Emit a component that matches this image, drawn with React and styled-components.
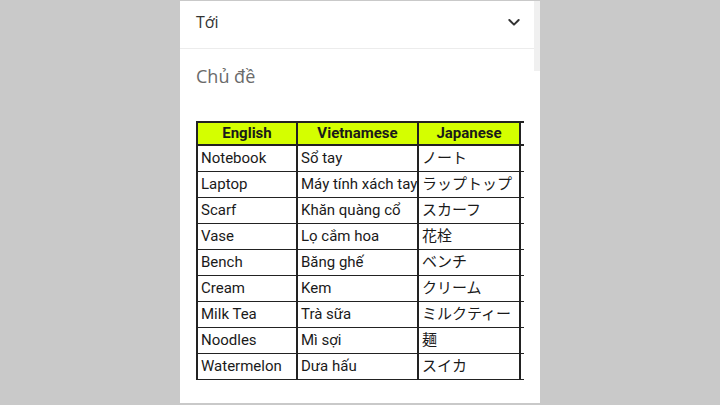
import React from 'react';
import styled, { createGlobalStyle } from 'styled-components';

const GlobalStyle = createGlobalStyle`
  html, body {
    margin: 0;
    padding: 0;
    background: #c9c9c9;
    height: 405px;
    overflow: hidden;
  }
`;

const Page = styled.div`
  width: 720px;
  height: 405px;
  display: flex;
  justify-content: flex-start;
`;

const Panel = styled.div`
  position: relative;
  margin-left: 180px;
  margin-top: 1px;
  width: 360px;
  height: 402px;
  background: #fff;
  display: flex;
  flex-direction: column;
  font-family: "Open Sans", "Noto Sans", sans-serif;
`;

const Scroll = styled.div`
  position: absolute;
  right: 0;
  top: 0;
  width: 6px;
  height: 70px;
  background: #f0f0f0;
`;

const Header = styled.div`
  height: 48px;
  box-sizing: border-box;
  display: flex;
  align-items: center;
  justify-content: space-between;
  padding: 0 18px 5px 16px;
  border-bottom: 1px solid #ececec;
  color: #333;
  font-size: 16px;
`;

const Subject = styled.div`
  padding: 15px 16px 0 16px;
  height: 40px;
  color: #6a6a6a;
  font-size: 18px;
`;

const TableWrap = styled.div`
  margin: 17px 0 0 16px;
  width: 328px;
  overflow: hidden;
`;

const Table = styled.table`
  border-collapse: collapse;
  font-family: Roboto, "Noto Sans CJK JP", sans-serif;
  color: #1a1a1a;
  table-layout: fixed;
  width: 418px;
`;

const Th = styled.th`
  background: ${p => (p.blank ? '#fff' : '#d4ff00')};
  border: 2px solid #222;
  height: 21px;
  line-height: 21px;
  padding: 0;
  font-size: 15px;
  font-weight: 700;
  text-align: center;
  width: ${p => p.w}px;
`;

const Td = styled.td`
  border: 2px solid #222;
  border-top-width: 1px;
  border-bottom-width: 1px;
  height: 25px;
  line-height: 25px;
  vertical-align: middle;
  padding: 0 3px;
  white-space: nowrap;
  overflow: hidden;
  font-size: 15px;
`;

const Dot = styled.span`
  color: #bbb;
  font-size: 10px;
  line-height: 10px;
`;

const rows = [
  ['Notebook', 'Sổ tay', 'ノート'],
  ['Laptop', 'Máy tính xách tay', 'ラップトップ'],
  ['Scarf', 'Khăn quàng cổ', 'スカーフ'],
  ['Vase', 'Lọ cắm hoa', '花栓'],
  ['Bench', 'Băng ghế', 'ベンチ'],
  ['Cream', 'Kem', 'クリーム'],
  ['Milk Tea', 'Trà sữa', 'ミルクティー'],
  ['Noodles', 'Mì sợi', '麺'],
  ['Watermelon', 'Dưa hấu', 'スイカ'],
];

function Chevron() {
  return (
    <svg width="16" height="16" viewBox="0 0 24 24" fill="none" stroke="#333" strokeWidth="3" strokeLinecap="round" strokeLinejoin="round">
      <path d="M5 9l7 7 7-7" />
    </svg>
  );
}

export default function App() {
  return (
    <Page>
      <GlobalStyle />
      <Panel>
        <Scroll />
        <Header>
          <span>Tới</span>
          <Chevron />
        </Header>
        <Subject>Chủ đề</Subject>
        <TableWrap>
          <Table>
            <thead>
              <tr>
                <Th w={98}>English</Th>
                <Th w={119}>Vietnamese</Th>
                <Th w={100}>Japanese</Th>
                <Th w={100} blank />
              </tr>
            </thead>
            <tbody>
              {rows.map(r => (
                <tr key={r[0]}>
                  <Td>{r[0]}</Td>
                  <Td>{r[1]}</Td>
                  <Td>{r[2]}</Td>
                  <Td><Dot>·</Dot></Td>
                </tr>
              ))}
            </tbody>
          </Table>
        </TableWrap>
      </Panel>
    </Page>
  );
}
